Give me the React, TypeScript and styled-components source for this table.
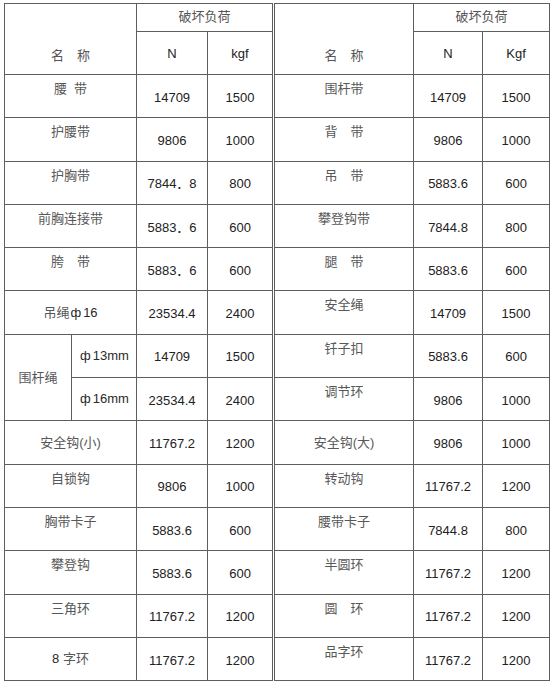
import React from "react";
import styled, { createGlobalStyle } from "styled-components";

const GlobalStyle = createGlobalStyle`
  html, body {
    margin: 0;
    padding: 0;
    background: #ffffff;
  }
  body {
    font-family: "Liberation Sans", "Noto Sans CJK SC", sans-serif;
  }
`;

const Page = styled.div`
  display: flex;
  align-items: flex-start;
  gap: 1px;
  padding: 3px 0 0 4px;
  width: 554px;
  height: 688px;
  box-sizing: border-box;
`;

const Table = styled.table<{ $width: number }>`
  width: ${(p) => p.$width}px;
  border-collapse: collapse;
  table-layout: fixed;
  border: 1px solid #5e5e5e;
  font-family: "Liberation Sans", "Noto Sans CJK SC", sans-serif;
`;

const Row = styled.tr<{ $h: number }>`
  height: ${(p) => p.$h}px;
`;

const Cell = styled.td`
  border: 1px solid #5e5e5e;
  padding: 0;
  text-align: center;
  font-size: 13px;
  line-height: 16px;
`;

const HeadCell = styled(Cell)`
  color: #555;
  vertical-align: middle;
  padding-bottom: 2px;
`;

const UnitCell = styled(Cell)`
  color: #222;
  vertical-align: middle;
  padding-top: 1px;
`;

const TitleCell = styled(Cell)`
  color: #555;
  vertical-align: bottom;
  padding-bottom: 10px;
`;

const NameCell = styled(Cell)<{ $top?: boolean }>`
  color: #585858;
  vertical-align: ${(p) => (p.$top ? "top" : "middle")};
  padding-top: ${(p) => (p.$top ? "6px" : "0")};
`;

const NumCell = styled(Cell)`
  color: #222;
  vertical-align: middle;
  padding-top: 3px;
`;

const Latin = styled.span`
  font-family: "Liberation Sans", sans-serif;
  color: #2a2a2a;
`;

const Phi = styled(Latin)`
  margin: 0 2px 0 1px;
`;

function Dia({ prefix, size }: { prefix?: string; size: string }) {
  return (
    <>
      {prefix}
      <Phi>ф</Phi>
      <Latin>{size}</Latin>
    </>
  );
}

type Item = {
  name?: React.ReactNode;
  group?: string;
  sub?: React.ReactNode;
  n: string;
  kgf: string;
  top?: boolean;
};

const SP = "\u00a0\u00a0";
const WIDE = "\u3000";

const left: Item[] = [
  { name: `腰${SP}带`, n: "14709", kgf: "1500", top: true },
  { name: "护腰带", n: "9806", kgf: "1000", top: true },
  { name: "护胸带", n: "7844．8", kgf: "800", top: true },
  { name: "前胸连接带", n: "5883．6", kgf: "600", top: true },
  { name: `胯${WIDE}带`, n: "5883．6", kgf: "600", top: true },
  { name: <Dia prefix="吊绳" size="16" />, n: "23534.4", kgf: "2400" },
  { group: "围杆绳", sub: <Dia size="13mm" />, n: "14709", kgf: "1500" },
  { sub: <Dia size="16mm" />, n: "23534.4", kgf: "2400" },
  { name: "安全钩(小)", n: "11767.2", kgf: "1200" },
  { name: "自锁钩", n: "9806", kgf: "1000", top: true },
  { name: "胸带卡子", n: "5883.6", kgf: "600", top: true },
  { name: "攀登钩", n: "5883.6", kgf: "600", top: true },
  { name: "三角环", n: "11767.2", kgf: "1200", top: true },
  { name: <><Latin>8</Latin> 字环</>, n: "11767.2", kgf: "1200" },
];

const right: Item[] = [
  { name: "围杆带", n: "14709", kgf: "1500", top: true },
  { name: `背${WIDE}带`, n: "9806", kgf: "1000", top: true },
  { name: `吊${WIDE}带`, n: "5883.6", kgf: "600", top: true },
  { name: "攀登钩带", n: "7844.8", kgf: "800", top: true },
  { name: `腿${WIDE}带`, n: "5883.6", kgf: "600", top: true },
  { name: "安全绳", n: "14709", kgf: "1500", top: true },
  { name: "钎子扣", n: "5883.6", kgf: "600", top: true },
  { name: "调节环", n: "9806", kgf: "1000", top: true },
  { name: "安全钩(大)", n: "9806", kgf: "1000" },
  { name: "转动钩", n: "11767.2", kgf: "1200", top: true },
  { name: "腰带卡子", n: "7844.8", kgf: "800", top: true },
  { name: "半圆环", n: "11767.2", kgf: "1200", top: true },
  { name: `圆${WIDE}环`, n: "11767.2", kgf: "1200", top: true },
  { name: "品字环", n: "11767.2", kgf: "1200", top: true },
];

const ROW_H = 43.3;

function LoadTable(props: {
  items: Item[];
  cols: number[];
  split?: boolean;
  unit: string;
}) {
  const width = props.cols.reduce((a, b) => a + b, 0);
  const nameSpan = props.split ? 2 : 1;
  return (
    <Table $width={width}>
      <colgroup>
        {props.cols.map((w, i) => (
          <col key={i} style={{ width: w }} />
        ))}
      </colgroup>
      <tbody>
        <Row $h={28}>
          <TitleCell rowSpan={2} colSpan={nameSpan}>
            名{WIDE}称
          </TitleCell>
          <HeadCell colSpan={2}>破坏负荷</HeadCell>
        </Row>
        <Row $h={43}>
          <UnitCell>N</UnitCell>
          <UnitCell>{props.unit}</UnitCell>
        </Row>
        {props.items.map((it, i) => (
          <Row $h={ROW_H} key={i}>
            {it.group && <NameCell rowSpan={2}>{it.group}</NameCell>}
            {it.sub ? (
              <NameCell>{it.sub}</NameCell>
            ) : (
              <NameCell colSpan={nameSpan} $top={it.top}>
                {it.name}
              </NameCell>
            )}
            <NumCell>{it.n}</NumCell>
            <NumCell>{it.kgf}</NumCell>
          </Row>
        ))}
      </tbody>
    </Table>
  );
}

export default function App() {
  return (
    <>
      <GlobalStyle />
      <Page>
        <LoadTable items={left} cols={[67, 65, 71, 65]} split unit="kgf" />
        <LoadTable items={right} cols={[139, 69, 67]} unit="Kgf" />
      </Page>
    </>
  );
}
